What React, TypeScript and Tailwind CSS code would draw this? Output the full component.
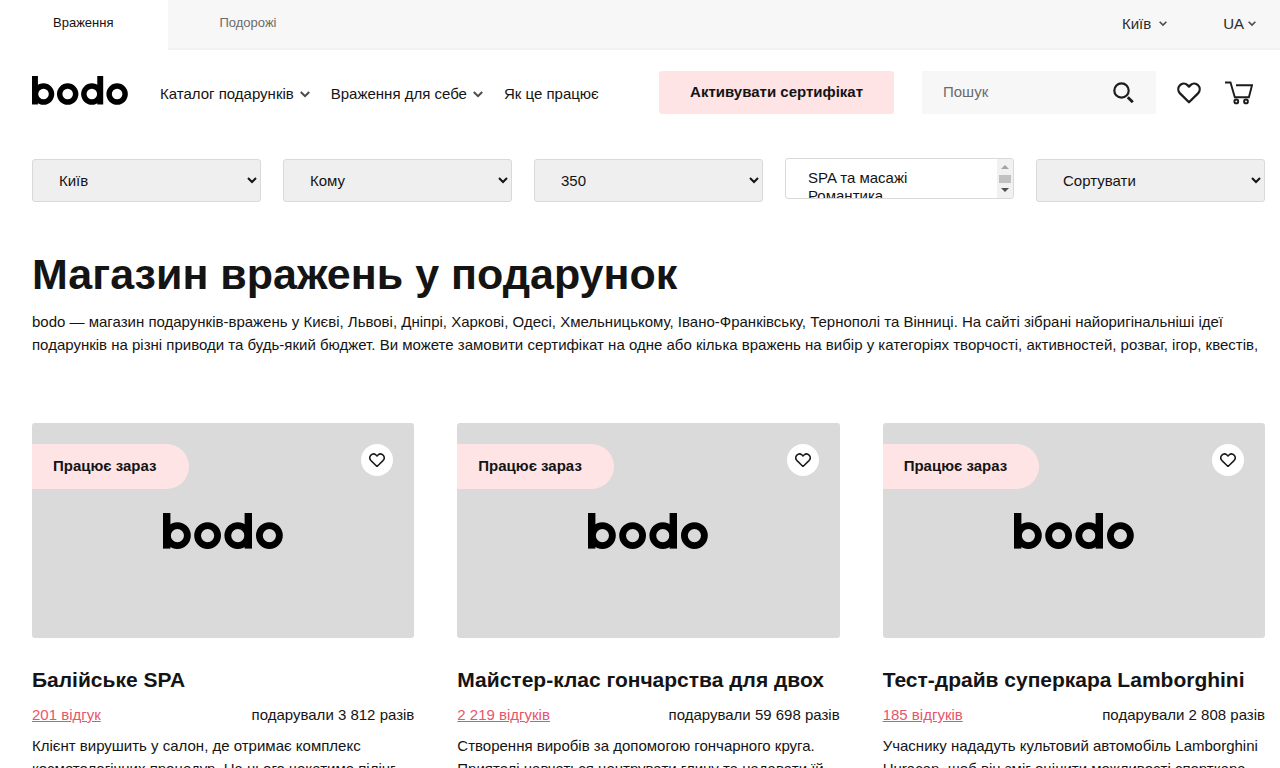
import clsx from "clsx";
import { useState } from "react";

type Card = {
  id: number;
  title: string;
  reviews: string;
  gifted: string;
  description: string;
};

const cards: Card[] = [
  {
    id: 1,
    title: "Балійське SPA",
    reviews: "201 відгук",
    gifted: "подарували 3 812 разів",
    description: "Клієнт вирушить у салон, де отримає комплекс косметологічних процедур. На нього чекатиме пілінг",
  },
  {
    id: 2,
    title: "Майстер-клас гончарства для двох",
    reviews: "2 219 відгуків",
    gifted: "подарували 59 698 разів",
    description: "Створення виробів за допомогою гончарного круга. Приятелі навчаться центрувати глину та надавати їй",
  },
  {
    id: 3,
    title: "Тест-драйв суперкара Lamborghini",
    reviews: "185 відгуків",
    gifted: "подарували 2 808 разів",
    description: "Учаснику нададуть культовий автомобіль Lamborghini Huracan, щоб він зміг оцінити можливості спорткара",
  },
];

const selectClass = "h-[43px] w-full rounded-[3px] border border-[#d9d9d9] bg-[#efefef] pl-[22px] text-[15px] text-[#141414]";

const Logo = ({ className }: { className?: string }) => (
  <svg viewBox="0 0 120 36" className={className} role="img" aria-label="bodo">
    <g fill="none" stroke="#000" strokeWidth="6.8">
      <circle cx="14.4" cy="22.6" r="10" />
      <circle cx="44.6" cy="22.6" r="10" />
      <circle cx="74.8" cy="22.6" r="10" />
      <circle cx="106.4" cy="22.6" r="10" />
    </g>
    <rect x="0" y="0" width="7.4" height="35.6" />
    <rect x="81.6" y="0" width="7.4" height="35.6" />
  </svg>
);

const HeartIcon = ({ className }: { className?: string }) => (
  <svg viewBox="0 0 24 22" className={className} fill="none" stroke="#1c1c1c" strokeWidth="2.3" strokeLinejoin="round">
    <path d="M12 20.2 3 11.4C.8 9 .8 5.400 2.900 3.200 5 1 8.300 1 10.500 3.100L12 4.600l1.500-1.500c2.200-2.100 5.500-2.100 7.600.1 2.100 2.200 2.100 5.800-.1 8.200Z" />
  </svg>
);

const SearchIcon = () => (
  <svg viewBox="0 0 21 21" className="size-[21px]" fill="none" stroke="#1c1c1c">
    <circle cx="8.500" cy="8.500" r="7.200" strokeWidth="2.200" />
    <path d="m14.800 15.200 5 5" strokeWidth="2.900" />
  </svg>
);

const CartIcon = () => (
  <svg viewBox="0 0 28 24" className="h-6 w-7" fill="none" stroke="#1c1c1c" strokeWidth="1.900">
    <path d="M0 1.500h5.500l4.300 14.700h14.100L27 4.300H11" />
    <circle cx="11.300" cy="20.400" r="1.900" />
    <circle cx="21" cy="20.400" r="1.900" />
  </svg>
);

const Chevron = ({ className }: { className?: string }) => (
  <svg viewBox="0 0 10 7" className={className} fill="none" stroke="#4a4a4a" strokeWidth="2">
    <path d="m.8 1 4.200 4.200L9.200 1" />
  </svg>
);

const TopBar = () => (
  <div className="flex h-[50px] items-stretch justify-between border-b-2 border-[#f2f2f2] bg-[#f7f7f7] text-[13px]">
    <nav className="-mb-0.5 flex">
      <a href="#" className="flex items-center bg-white pr-[55px] pb-1 pl-[53px] text-[#141414]">
        Враження
      </a>
      <a href="#" className="flex items-center px-[51px] pb-1 text-[#6b6b6b]">
        Подорожі
      </a>
    </nav>
    <div className="flex items-center gap-14 pr-6 text-[15px] text-[#2b2b2b]">
      <button className="flex items-center gap-2">
        Київ <Chevron className="w-2" />
      </button>
      <button className="flex items-center gap-1">
        UA <Chevron className="w-2" />
      </button>
    </div>
  </div>
);

const Header = () => (
  <header className="flex items-center pt-[21px] pr-[27px] pl-8">
    <a href="#" className="shrink-0 pb-1">
      <Logo className="w-24" />
    </a>
    <nav className="ml-8 flex items-center gap-[21px] pt-1 whitespace-nowrap">
      <button className="flex items-center gap-1.5">
        Каталог подарунків <Chevron className="w-2.5" />
      </button>
      <button className="flex items-center gap-1.5">
        Враження для себе <Chevron className="w-2.5" />
      </button>
      <a href="#">Як це працює</a>
    </nav>
    <button className="ml-auto h-[43px] rounded-[3px] bg-[#ffe4e6] px-[31px] font-bold whitespace-nowrap">
      Активувати сертифікат
    </button>
    <form className="ml-7 flex h-[43px] w-[234px] items-center justify-between bg-[#f7f7f7] pr-[22px] pl-[21px]">
      <input
        type="text"
        aria-label="Пошук"
        placeholder="Пошук"
        className="min-w-0 flex-1 outline-none placeholder:text-[#6b6b6b]"
      />
      <button type="button" aria-label="Знайти">
        <SearchIcon />
      </button>
    </form>
    <button aria-label="Обране" className="ml-[21px]">
      <HeartIcon className="w-6" />
    </button>
    <button aria-label="Кошик" className="ml-6">
      <CartIcon />
    </button>
  </header>
);

const Filters = () => (
  <div className="mt-11 grid grid-cols-5 items-center gap-[22px]">
    <select aria-label="Місто" className={selectClass}>
      <option>Київ</option>
      <option>Львів</option>
      <option>Дніпро</option>
    </select>
    <select aria-label="Кому" className={selectClass}>
      <option>Кому</option>
    </select>
    <select aria-label="Бюджет" className={selectClass}>
      <option>350</option>
    </select>
    <div className="mb-1 flex h-[41px] overflow-hidden rounded-[3px] border border-[#d9d9d9] bg-white">
      <select
        multiple
        size={2}
        aria-label="Категорії"
        className="min-w-0 flex-1 overflow-y-auto pt-[10px] pl-[22px] [scrollbar-width:none]"
      >
        <option>SPA та масажі</option>
        <option>Романтика</option>
      </select>
      {/* scroll track */}
      <div aria-hidden="true" className="flex w-4 flex-col items-center justify-between bg-[#f1f1f1] py-1.5">
        <span className="border-x-4 border-b-4 border-transparent border-b-[#a3a3a3]" />
        <span className="h-2 w-3 bg-[#c1c1c1]" />
        <span className="border-x-4 border-t-4 border-transparent border-t-[#505050]" />
      </div>
    </div>
    <select aria-label="Сортувати" className={selectClass}>
      <option>Сортувати</option>
    </select>
  </div>
);

const ExperienceCard = ({ card }: { card: Card }) => {
  const [liked, setLiked] = useState(false);

  return (
    <li>
      <div className="relative flex h-[215px] items-center justify-center overflow-hidden rounded-[3px] bg-[#dadada]">
        <Logo className="w-[120px]" />
        <span className="absolute top-[21px] left-0 flex h-[45px] items-center rounded-r-full bg-[#ffe4e6] pr-8 pl-[21px] font-bold">
          Працює зараз
        </span>
        <button
          aria-label="Додати в обране"
          aria-pressed={liked}
          onClick={() => setLiked(!liked)}
          className={clsx(
            "absolute top-[21px] right-[21px] flex size-8 items-center justify-center rounded-full",
            liked ? "bg-[#ffe4e6]" : "bg-white",
          )}
        >
          <HeartIcon className="w-4" />
        </button>
      </div>
      <h2 className="mt-7 text-[21px] leading-7 font-bold">{card.title}</h2>
      <div className="mt-[9px] flex justify-between leading-6">
        <a href="#" className="text-[#e8556a] underline">
          {card.reviews}
        </a>
        <span>{card.gifted}</span>
      </div>
      <p className="mt-[7px] leading-[23px]">{card.description}</p>
    </li>
  );
};

const App = () => {
  return (
    <div className="bg-white font-['Liberation_Sans',Arial,sans-serif] text-[15px] text-[#141414]">
      <TopBar />
      <Header />
      <main className="pr-[15px] pl-8">
        <Filters />
        <h1 className="mt-[46px] text-[43px] leading-[50px] font-bold">Магазин вражень у подарунок</h1>
        <p className="mt-[11px] leading-[23px]">
          bodo — магазин подарунків-вражень у Києві, Львові, Дніпрі, Харкові, Одесі, Хмельницькому, Івано-Франківську,
          Тернополі та Вінниці. На сайті зібрані найоригінальніші ідеї подарунків на різні приводи та будь-який бюджет.
          Ви можете замовити сертифікат на одне або кілька вражень на вибір у категоріях творчості, активностей, розваг,
          ігор, квестів,
        </p>
        <ul className="mt-[67px] grid grid-cols-3 gap-[43px]">
          {cards.map((card) => (
            <ExperienceCard key={card.id} card={card} />
          ))}
        </ul>
      </main>
    </div>
  );
};

export default App;
